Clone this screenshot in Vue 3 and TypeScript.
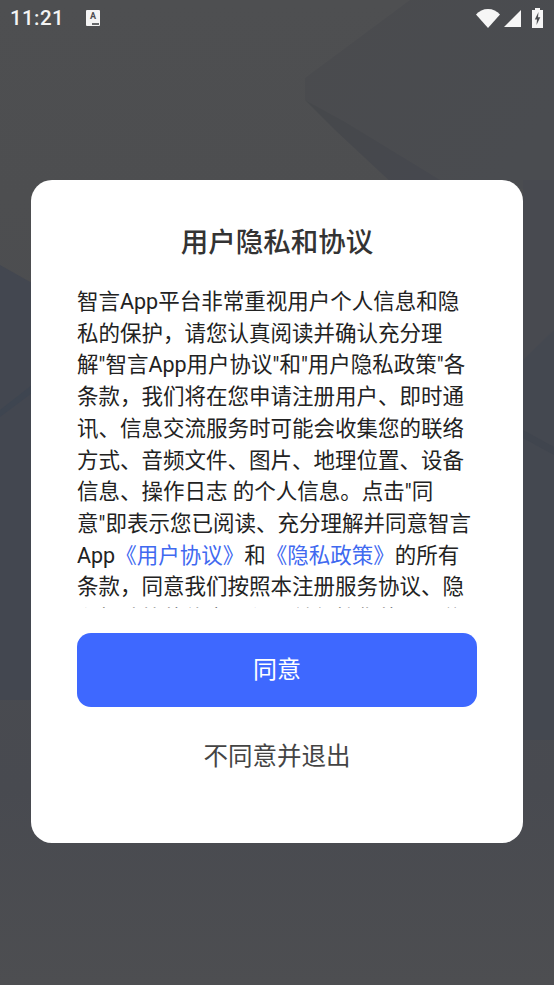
<script setup lang="ts">
const first = '智言App平台非常重视用户个人信息和隐私的保护，请您认真阅读并确认充分理解"智言App用户协议"和"用户隐私政策"各条款，我们将在您申请注册用户、即时通讯、信息交流服务时可能会收集您的联络方式、音频文件、图片、地理位置、设备信息、操作日志 的个人信息。点击"同意"即表示您已阅读、充分理解并同意智言App'
const last = '的所有条款，同意我们按照本注册服务协议、隐私权政策的约定，使用并保护您的个人信息。'
</script>

<template>
  <div class="screen">
    <svg class="backdrop" viewBox="0 0 554 985" preserveAspectRatio="none" aria-hidden="true">
      <defs>
        <linearGradient id="bg" x1="0" y1="0" x2="0" y2="1">
          <stop offset="0" stop-color="#4e4f51" />
          <stop offset="0.2" stop-color="#4d4e50" />
          <stop offset="0.8" stop-color="#484a50" />
          <stop offset="1" stop-color="#4d4e51" />
        </linearGradient>
        <linearGradient id="facet" x1="0" y1="0" x2="1" y2="0.6">
          <stop offset="0" stop-color="#4a4b4e" />
          <stop offset="1" stop-color="#4a4c50" />
        </linearGradient>
        <linearGradient id="shade" x1="0" y1="0" x2="1" y2="0.5">
          <stop offset="0" stop-color="#46484b" />
          <stop offset="1" stop-color="#46484e" />
        </linearGradient>
      </defs>
      <rect width="554" height="985" fill="url(#bg)" />
      <polygon points="305,78 410,0 554,0 554,190 450,186 305,100" fill="url(#facet)" />
      <polygon points="305,100 345,122 450,186 395,186 335,130" fill="url(#shade)" />
      <polygon points="523,180 554,180 554,330 523,360" fill="#484a50" />
      <polygon points="0,265 32,283 32,700 0,700" fill="#434750" />
      <polygon points="0,410 32,385 32,393 0,417" fill="#3e4550" />
      <polygon points="523,360 554,330 554,740 523,740" fill="#444850" />
      <polygon points="523,430 554,447 554,455 523,438" fill="#40454e" />
    </svg>

    <header class="status">
      <span class="time">11:21</span>
      <span class="notice"><b>A</b><i></i></span>
      <span class="grow"></span>
      <svg class="wifi" viewBox="0 0 24 19"><path d="M0 5.500C3 2 7.300 0 12 0s9 2 12 5.500L12 19Z" /></svg>
      <svg class="signal" viewBox="0 0 17 17"><path d="M17 0V17H0Z" /></svg>
      <svg class="battery" viewBox="0 0 11 20">
        <path fill-rule="evenodd" d="M3 0H8V2H11V20H0V2H3ZM6.500 4 2.800 11.500H5L4.500 17 8.300 9.300H6Z" />
      </svg>
    </header>

    <main class="overlay">
      <section class="dialog">
        <h1>用户隐私和协议</h1>
        <div class="scroll">
          <p>{{ first }}<a>《用户协议》</a>和<a>《隐私政策》</a>{{ last }}</p>
        </div>
        <button class="agree" type="button">同意</button>
        <button class="exit" type="button">不同意并退出</button>
      </section>
    </main>
  </div>
</template>

<style>
html, body { margin: 0; background: #4a4b4f; }
</style>

<style scoped>
.screen {
  position: relative;
  width: 554px;
  height: 985px;
  overflow: hidden;
  font-family: Roboto, "Noto Sans CJK SC", sans-serif;
}
.backdrop { position: absolute; inset: 0; width: 100%; height: 100%; }
.status {
  position: relative;
  height: 36px;
  padding: 0 10px;
  box-sizing: border-box;
  display: flex;
  align-items: center;
  color: #f4f4f4;
}
.time { font: 500 20.500px/36px Roboto, sans-serif; letter-spacing: .4px; }
.notice {
  position: relative;
  width: 14px;
  height: 16px;
  margin-left: 22px;
  margin-top: -1px;
  background: #f4f4f4;
  border-radius: 1px;
  color: #4c4d4f;
  text-align: center;
}
.notice b { display: block; font: 700 9px/12px Roboto, sans-serif; }
.notice i {
  position: absolute; right: 1px; bottom: 1px; width: 7px; height: 1.500px;
  background: #66686a;
}
.grow { flex: 1; }
svg { fill: #f6f6f6; }
.wifi { width: 24px; height: 19px; margin-right: 4px; }
.signal { width: 17px; height: 17px; margin-right: 11px; margin-top: 1px; }
.battery { width: 11px; height: 20px; margin-right: 1px; }
.overlay {
  position: relative;
  padding: 144px 31px 0;
}
.dialog {
  height: 663px;
  box-sizing: border-box;
  background: #fff;
  border-radius: 21px;
  padding: 0 46px;
  display: flex;
  flex-direction: column;
}
h1 {
  margin: 0;
  padding-top: 41px;
  font-size: 27.500px;
  font-weight: 500;
  line-height: 44px;
  color: #333;
  text-align: center;
}
.scroll {
  height: 322px;
  margin-top: 21px;
  overflow: hidden;
}
p {
  margin: 0;
  font-size: 21.500px;
  font-weight: 400;
  line-height: 31.700px;
  color: #222;
}
a { color: #4069f0; }
button {
  border: 0;
  padding: 0;
  font-family: inherit;
  background: none;
  display: block;
  width: 100%;
}
.agree {
  height: 74px;
  margin-top: 25px;
  padding-bottom: 5px;
  box-sizing: border-box;
  background: #3e68ff;
  border-radius: 14px;
  color: #fff;
  font-size: 24px;
}
.exit {
  height: 40px;
  margin-top: 30px;
  color: #444;
  font-size: 24.500px;
  line-height: 40px;
}
</style>
